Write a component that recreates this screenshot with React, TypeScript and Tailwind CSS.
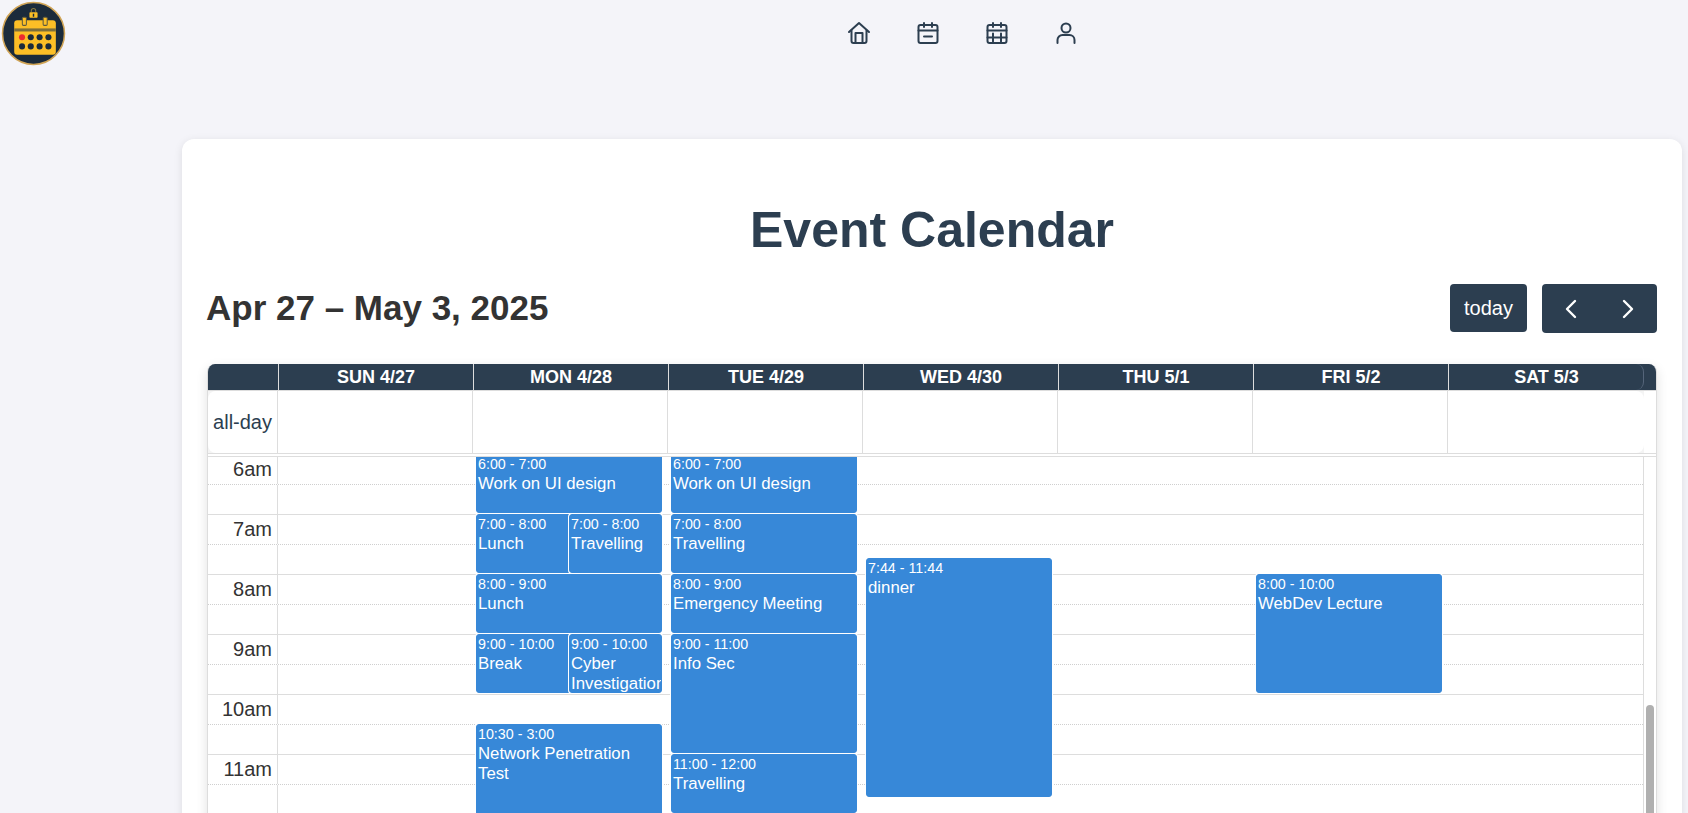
import { ChevronLeft, ChevronRight } from "lucide-react";

const days = ["SUN 4/27", "MON 4/28", "TUE 4/29", "WED 4/30", "THU 5/1", "FRI 5/2", "SAT 5/3"];
const hours = ["6am", "7am", "8am", "9am", "10am", "11am"];

// day = column index, start/end in hours, half = second of two side by side events
const events = [
  { day: 1, start: 6, end: 7, time: "6:00 - 7:00", title: "Work on UI design" },
  { day: 1, start: 7, end: 8, time: "7:00 - 8:00", title: "Lunch" },
  { day: 1, start: 7, end: 8, time: "7:00 - 8:00", title: "Travelling", half: true },
  { day: 1, start: 8, end: 9, time: "8:00 - 9:00", title: "Lunch" },
  { day: 1, start: 9, end: 10, time: "9:00 - 10:00", title: "Break" },
  { day: 1, start: 9, end: 10, time: "9:00 - 10:00", title: "Cyber Investigation", half: true },
  { day: 1, start: 10.5, end: 15, time: "10:30 - 3:00", title: "Network Penetration Test" },
  { day: 2, start: 6, end: 7, time: "6:00 - 7:00", title: "Work on UI design" },
  { day: 2, start: 7, end: 8, time: "7:00 - 8:00", title: "Travelling" },
  { day: 2, start: 8, end: 9, time: "8:00 - 9:00", title: "Emergency Meeting" },
  { day: 2, start: 9, end: 11, time: "9:00 - 11:00", title: "Info Sec" },
  { day: 2, start: 11, end: 12, time: "11:00 - 12:00", title: "Travelling" },
  { day: 3, start: 7 + 44 / 60, end: 11 + 44 / 60, time: "7:44 - 11:44", title: "dinner" },
  { day: 5, start: 8, end: 10, time: "8:00 - 10:00", title: "WebDev Lecture" },
];

function Logo() {
  return (
    <svg viewBox="0 0 64 64" className="h-[65px] w-[65px]">
      <circle cx="32" cy="32" r="30.5" fill="#1b2b3b" stroke="#d0a456" strokeWidth="1.5" />
      <path d="M29.8 11V9.5a2.2 2.2 0 0 1 4.4 0V11" fill="none" stroke="#8a7a3f" strokeWidth="1" />
      <rect x="28" y="11" width="8" height="5.5" rx="0.8" fill="#fcbf26" />
      <rect x="31.3" y="12.5" width="1.4" height="3" fill="#1b2b3b" />
      <rect x="13" y="19" width="41" height="34" rx="3" fill="#fcbf26" />
      <rect x="13" y="27" width="41" height="3" fill="#7d6f3a" />
      <rect x="21" y="16" width="4" height="8" rx="1" fill="#fcbf26" stroke="#5d5a3f" strokeWidth="1" />
      <rect x="41.5" y="16" width="4" height="8" rx="1" fill="#fcbf26" stroke="#5d5a3f" strokeWidth="1" />
      <circle cx="20.7" cy="35.7" r="3" fill="#ee2b2f" />
      <circle cx="29.3" cy="35.7" r="3" fill="#1b2b3b" />
      <circle cx="38" cy="35.7" r="3" fill="#1b2b3b" />
      <circle cx="46.7" cy="35.7" r="3" fill="#1b2b3b" />
      <circle cx="20.7" cy="44.7" r="3" fill="#1b2b3b" />
      <circle cx="29.3" cy="44.7" r="3" fill="#1b2b3b" />
      <circle cx="38" cy="44.7" r="3" fill="#1b2b3b" />
      <circle cx="46.7" cy="44.7" r="3" fill="#1b2b3b" />
    </svg>
  );
}

function NavIcon({ children }: { children: React.ReactNode }) {
  return (
    <svg
      viewBox="0 0 24 24"
      fill="none"
      stroke="#2c3e50"
      strokeWidth="2"
      strokeLinecap="round"
      strokeLinejoin="round"
      className="h-6 w-6"
    >
      {children}
    </svg>
  );
}

function Nav() {
  return (
    <nav className="ml-[781px] mt-[20px] flex gap-[45px]">
      <NavIcon>
        <path d="M2 11 12 2l10 9" />
        <path d="M4.5 9.5V20a2 2 0 0 0 2 2h11a2 2 0 0 0 2-2V9.5" />
        <path d="M8.5 22V12h7v10" />
      </NavIcon>
      <NavIcon>
        <rect x="2.5" y="4" width="19" height="18" rx="2" />
        <path d="M8 2v4M16 2v4M2.5 9.5h19M8 15.5h8" />
      </NavIcon>
      <NavIcon>
        <rect x="2.5" y="4" width="19" height="18" rx="2" />
        <path d="M8 2v4M16 2v4M2.5 9.5h19M2.5 16.5h19M8 12.5v8M16 12.5v8" />
      </NavIcon>
      <NavIcon>
        <circle cx="12" cy="7" r="4.5" />
        <path d="M3.5 22v-3a5 5 0 0 1 5-5h7a5 5 0 0 1 5 5v3" />
      </NavIcon>
    </nav>
  );
}

function EventBox({ ev }: { ev: (typeof events)[number] }) {
  const top = (ev.start - 6) * 60 - 1;
  const height = (ev.end - ev.start) * 60 - 1;
  const left = 70 + ev.day * 195 + 3 + (ev.half ? 93 : 0);
  const width = ev.half ? 93 : 186;
  return (
    <div
      className="absolute overflow-hidden rounded-[3px] border border-[#3788d8] bg-[#3788d8] px-[1px] pt-[1px] text-white shadow-[0_0_0_1px_#fff]"
      style={{ top, height, left, width }}
    >
      <div className="mb-[1px] whitespace-nowrap text-[14.28px] leading-[1.2]">{ev.time}</div>
      <div className="text-[16.8px] leading-[1.2]">{ev.title}</div>
    </div>
  );
}

function TimeRow({ label }: { label: string }) {
  return (
    <>
      <div className="flex h-[30px] border-b border-dotted border-[#cfcfcf]">
        <div className="w-[70px] shrink-0 border-r border-[#ddd] pr-[5px] text-right text-[20px] leading-[29px] text-[#333]">
          {label}
        </div>
      </div>
      <div className="flex h-[30px] border-b border-[#ddd]">
        <div className="w-[70px] shrink-0 border-r border-[#ddd]" />
      </div>
    </>
  );
}

function Calendar() {
  return (
    <div className="w-[1450px] overflow-hidden rounded-t-lg border-x border-[#ddd] bg-white shadow-[0_4px_12px_rgba(0,0,0,0.12)]">
      <div className="bg-[#2c3e50]">
        <div className="flex h-[26px] w-[1436px] rounded-r-lg border-r border-[#55657a]">
          <div className="w-[71px] shrink-0 border-r border-[#ddd]" />
          {days.map((d, i) => (
            <div
              key={d}
              className={`flex w-[195px] shrink-0 items-center justify-center text-[18px] font-bold text-white ${i < 6 ? "border-r border-[#ddd]" : ""}`}
            >
              {d}
            </div>
          ))}
        </div>
      </div>
      <div className="h-[64px] border-y border-[#ddd]">
        <div className="h-full w-[1436px] bg-[#f4f4f4]">
          <div className="flex h-full rounded-lg bg-white">
            <div className="flex w-[70px] shrink-0 items-center justify-end border-r border-[#ddd] pr-[5px] text-[20px] text-[#2c3e50]">
              all-day
            </div>
            {days.map((d, i) => (
              <div key={d} className={`w-[195px] shrink-0 ${i < 6 ? "border-r border-[#ddd]" : ""}`} />
            ))}
          </div>
        </div>
      </div>
      <div className="mt-[2px] flex h-[500px] border-t border-[#ddd]">
        <div className="w-[1436px] shrink-0 overflow-hidden border-r border-[#ddd]">
          <div className="relative -mt-[2px]">
            {hours.map((h) => (
              <TimeRow key={h} label={h} />
            ))}
            {events.map((ev) => (
              <EventBox key={ev.day + ev.title + ev.start} ev={ev} />
            ))}
          </div>
        </div>
        <div className="ml-[2px] w-[8px]">
          <div className="mt-[248px] h-[200px] rounded-t-[4px] bg-[#b0b0b0]" />
        </div>
      </div>
    </div>
  );
}

function Toolbar() {
  return (
    <div className="mt-[25px] flex h-[49px] items-center justify-between pr-[25px]">
      <h2 className="-ml-[1px] text-[35px] font-bold text-[#333]">Apr 27 – May 3, 2025</h2>
      <div className="flex items-start gap-[15px]">
        <button className="h-[48px] w-[77px] rounded-[4px] bg-[#2c3e50] text-[20px] text-white">today</button>
        <div className="flex h-[49px] w-[115px] rounded-[4px] bg-[#2c3e50] text-white">
          <div className="flex w-[57px] items-center justify-center">
            <ChevronLeft size={32} strokeWidth={1.8} />
          </div>
          <div className="flex w-[58px] items-center justify-center">
            <ChevronRight size={32} strokeWidth={1.8} />
          </div>
        </div>
      </div>
    </div>
  );
}

export default function App() {
  return (
    <div className="h-screen w-full overflow-hidden bg-[#f4f4f9] font-['Liberation_Sans',Arial,sans-serif]">
      <header className="flex h-[139px] pl-[1px] pt-[1px]">
        <Logo />
        <Nav />
      </header>
      <main className="ml-[182px] mr-[6px] h-[800px] rounded-xl bg-white pl-[25px] pt-[62px] shadow-[0_2px_8px_rgba(0,0,0,0.1)]">
        <h1 className="-ml-[25px] text-center text-[50px] font-bold leading-[58px] text-[#2c3e50]">
          Event Calendar
        </h1>
        <Toolbar />
        <div className="mt-[31px]">
          <Calendar />
        </div>
      </main>
    </div>
  );
}
